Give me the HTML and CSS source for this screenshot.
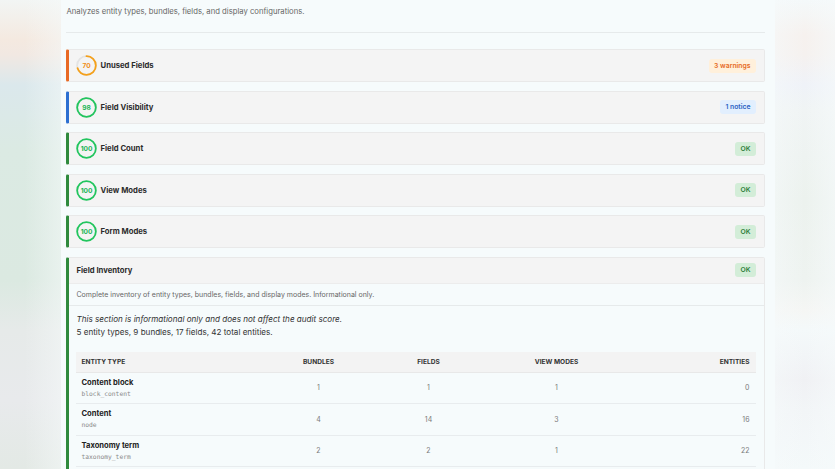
FILE: index.html
```html
<!DOCTYPE html>
<html lang="en">

<head>
    <meta charset="UTF-8">
    <meta name="viewport" content="width=device-width, initial-scale=1.0">
    <title>Field audit</title>
    <link rel="stylesheet" href="styles.css">
</head>

<body>

    <main class="panel">
        <header class="intro">
            <p>Analyzes entity types, bundles, fields, and display configurations.</p>
        </header>

        <section class="check warn">
            <svg class="score" viewBox="0 0 22 22" width="21" height="21">
                <circle cx="11" cy="11" r="9.8" class="track" />
                <circle cx="11" cy="11" r="9.8" class="arc orange" stroke-dasharray="43.1 61.6" transform="rotate(-90 11 11)" />
                <text x="11" y="13.6" class="num orange-t">70</text>
            </svg>
            <h2>Unused Fields</h2>
            <span class="badge badge-warn">3 warnings</span>
        </section>

        <section class="check notice">
            <svg class="score" viewBox="0 0 22 22" width="21" height="21">
                <circle cx="11" cy="11" r="9.8" class="track" />
                <circle cx="11" cy="11" r="9.8" class="arc green" stroke-dasharray="60.4 61.6" transform="rotate(-90 11 11)" />
                <text x="11" y="13.6" class="num green-t">98</text>
            </svg>
            <h2>Field Visibility</h2>
            <span class="badge badge-notice">1 notice</span>
        </section>

        <section class="check ok">
            <svg class="score" viewBox="0 0 22 22" width="21" height="21">
                <circle cx="11" cy="11" r="9.8" class="arc green" />
                <text x="11" y="13.6" class="num green-t">100</text>
            </svg>
            <h2>Field Count</h2>
            <span class="badge badge-ok">OK</span>
        </section>

        <section class="check ok">
            <svg class="score" viewBox="0 0 22 22" width="21" height="21">
                <circle cx="11" cy="11" r="9.8" class="arc green" />
                <text x="11" y="13.6" class="num green-t">100</text>
            </svg>
            <h2>View Modes</h2>
            <span class="badge badge-ok">OK</span>
        </section>

        <section class="check ok">
            <svg class="score" viewBox="0 0 22 22" width="21" height="21">
                <circle cx="11" cy="11" r="9.8" class="arc green" />
                <text x="11" y="13.6" class="num green-t">100</text>
            </svg>
            <h2>Form Modes</h2>
            <span class="badge badge-ok">OK</span>
        </section>

        <section class="inventory">
            <div class="inv_head">
                <h2>Field Inventory</h2>
                <span class="badge badge-ok">OK</span>
            </div>
            <p class="inv_desc">Complete inventory of entity types, bundles, fields, and display modes. Informational only.</p>
            <div class="inv_body">
                <p class="note">This section is informational only and does not affect the audit score.</p>
                <p class="summary">5 entity types, 9 bundles, 17 fields, 42 total entities.</p>

                <table>
                    <colgroup>
                        <col class="c-type">
                        <col class="c-bundles">
                        <col class="c-fields">
                        <col class="c-modes">
                        <col class="c-ents">
                    </colgroup>
                    <thead>
                        <tr>
                            <th>Entity type</th>
                            <th class="mid">Bundles</th>
                            <th class="mid">Fields</th>
                            <th class="mid">View modes</th>
                            <th class="end">Entities</th>
                        </tr>
                    </thead>
                    <tbody>
                        <tr>
                            <td><strong>Content block</strong><code>block_content</code></td>
                            <td class="mid">1</td>
                            <td class="mid">1</td>
                            <td class="mid">1</td>
                            <td class="end">0</td>
                        </tr>
                        <tr>
                            <td><strong>Content</strong><code>node</code></td>
                            <td class="mid">4</td>
                            <td class="mid">14</td>
                            <td class="mid">3</td>
                            <td class="end">16</td>
                        </tr>
                        <tr>
                            <td><strong>Taxonomy term</strong><code>taxonomy_term</code></td>
                            <td class="mid">2</td>
                            <td class="mid">2</td>
                            <td class="mid">1</td>
                            <td class="end">22</td>
                        </tr>
                    </tbody>
                </table>
            </div>
        </section>
    </main>

</body>

</html>
```

FILE: styles.css
```css
html,
body {
    margin: 0;
    height: 100%;
    overflow: hidden;
}

body {
    font-family: Inter, "Noto Sans", sans-serif;
    color: #2a2a2a;
    background-color: #eef3f1;
    background-image:
        linear-gradient(90deg, rgba(246, 250, 250, 0) 40%, rgba(246, 250, 250, 0.5)),
        linear-gradient(#f2f5f4 0, #f4e9e0 40px, #f1e8e2 55px, #dbe8ec 85px, #dbeae3 150px, #dbe9e1 280px, #e6eae9 330px, #e8eaec 400px, #e3e9e5 469px),
        linear-gradient(90deg, rgba(246, 250, 251, 0.5), rgba(246, 250, 251, 0) 50%, rgba(246, 250, 251, 0.6)),
        linear-gradient(#f4f9fa 0, #f6f1ee 35px, #f5f1ef 55px, #eff2f8 85px, #f0f4f4 110px, #ecf2ee 200px, #eef3f0 280px, #f5f6f4 310px, #f4f9fa 330px, #f0f1f4 380px, #f2f5f7 410px, #f4f9fa 469px);
    background-size: 61px 100%, 61px 100%, 60px 100%, 60px 100%;
    background-position: left top, left top, right top, right top;
    background-repeat: no-repeat;
}

.panel {
    width: 714px;
    margin: 0 auto;
    padding: 0 10px 0 5px;
    box-sizing: border-box;
    min-height: 100%;
    background: #f6fbfc;
}

.intro {
    padding: 7px 0 16px 1px;
    border-bottom: 1px solid #e6eaeb;
    margin-bottom: 16px;
}

.intro p {
    margin: 0;
    font-size: 7.7px;
    color: #666;
}

/* audit checks */

.check {
    display: flex;
    align-items: center;
    height: 31px;
    padding: 0 8px 0 7px;
    margin-bottom: 8.5px;
    background: #f4f4f4;
    border: 1px solid #e9e9e9;
    border-left: 3px solid #2f8a3d;
    border-radius: 2px;
}

.check.warn {
    border-left-color: #e86a25;
}

.check.notice {
    border-left-color: #2c6fd1;
}

.check h2,
.inv_head h2 {
    margin: 0 0 0 4px;
    font-size: 7.7px;
    font-weight: 700;
    color: #2b2b2b;
}

.score {
    flex: none;
}

.track {
    fill: none;
    stroke: #e3e3e3;
    stroke-width: 1.9;
}

.arc {
    fill: none;
    stroke-width: 1.9;
    stroke-linecap: round;
}

.orange {
    stroke: #f5a01a;
}

.green {
    stroke: #22c55e;
}

.num {
    font-size: 6.9px;
    font-weight: 700;
    text-anchor: middle;
}

.orange-t {
    fill: #f08c14;
}

.green-t {
    fill: #20b455;
}

.badge {
    margin-left: auto;
    font-size: 6.8px;
    font-weight: 600;
    padding: 3px 5px;
    border-radius: 3px;
    line-height: 8px;
}

.badge-warn {
    background: #fff0db;
    color: #e66a1e;
}

.badge-notice {
    background: #e2effe;
    color: #2b63c4;
}

.badge-ok {
    background: #d3edd8;
    color: #2e7d3a;
}

/* inventory */

.inventory {
    background: #f6fbfc;
    border: 1px solid #e9e9e9;
    border-left: 3px solid #2f8a3d;
    border-radius: 2px;
}

.inv_head {
    display: flex;
    align-items: center;
    height: 25px;
    padding: 0 8px 0 4px;
    background: #f4f4f4;
    border-bottom: 1px solid #ececec;
}

.inv_desc {
    margin: 0;
    padding: 6px 8px;
    font-size: 7px;
    color: #666;
    border-bottom: 1px solid #e6eaeb;
}

.inv_body {
    padding: 7px 8px 20px 7px;
}

.note,
.summary {
    margin: 0;
    padding-left: 1px;
    font-size: 8.1px;
    color: #333;
    line-height: 13px;
}

.note {
    font-style: italic;
}

.summary {
    margin-bottom: 13px;
}

table {
    width: 100%;
    border-collapse: collapse;
    table-layout: fixed;
}

.c-type {
    width: 189px;
}

.c-bundles {
    width: 108px;
}

.c-fields {
    width: 112px;
}

.c-modes {
    width: 144px;
}

th {
    background: #f3f3f3;
    font-size: 6.6px;
    font-weight: 700;
    text-transform: uppercase;
    color: #333;
    text-align: left;
    height: 20px;
    padding: 0 6px;
    border-bottom: 1px solid #e8e8e8;
}

td {
    height: 30.5px;
    padding: 0 6px;
    font-size: 7px;
    color: #7a7a7a;
    border-bottom: 1px solid #e8ecee;
}

td strong {
    display: block;
    font-size: 7.6px;
    color: #222;
    margin-bottom: 2px;
}

td code {
    font-family: "DejaVu Sans Mono", monospace;
    font-size: 6.3px;
    color: #8a8a8a;
}

.mid {
    text-align: center;
}

.end {
    text-align: right;
}
```
